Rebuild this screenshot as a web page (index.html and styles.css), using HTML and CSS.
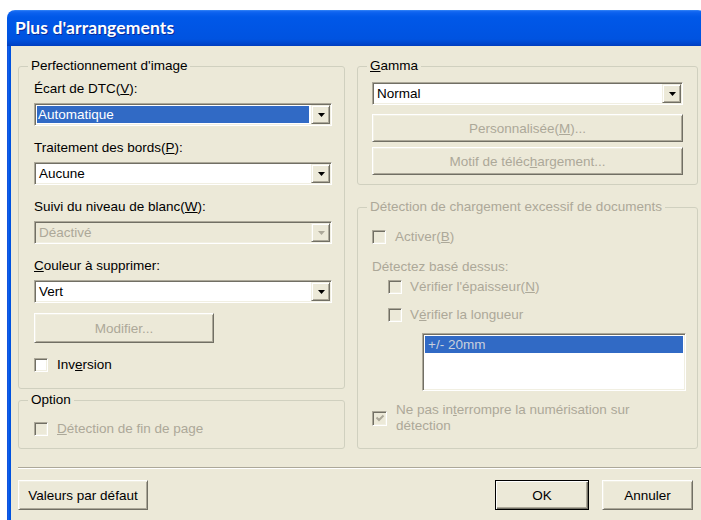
FILE: index.html
```html
<!DOCTYPE html>
<html lang="fr">
<head>
<meta charset="utf-8">
<title>Plus d'arrangements</title>
<link rel="stylesheet" href="styles.css">
</head>
<body>
<div class="window">
  <div class="titlebar"><span class="title">Plus d'arrangements</span></div>
  <div class="frame">
    <div class="client">
      <div class="columns">
        <div class="col">
          <fieldset class="group">
            <legend>Perfectionnement d'image</legend>
            <div class="gbody g-image">
              <div class="label">Écart de DTC(<u>V</u>):</div>
              <div class="combo"><span class="field selected">Automatique</span><span class="drop"><svg width="7" height="4" viewBox="0 0 7 4"><path d="M0 0h7L3.5 4z"/></svg></span></div>
              <div class="label">Traitement des bords(<u>P</u>):</div>
              <div class="combo"><span class="field">Aucune</span><span class="drop"><svg width="7" height="4" viewBox="0 0 7 4"><path d="M0 0h7L3.5 4z"/></svg></span></div>
              <div class="label">Suivi du niveau de blanc(<u>W</u>):</div>
              <div class="combo disabled"><span class="field">Déactivé</span><span class="drop"><svg width="7" height="4" viewBox="0 0 7 4"><path d="M0 0h7L3.5 4z"/></svg></span></div>
              <div class="label"><u>C</u>ouleur à supprimer:</div>
              <div class="combo"><span class="field">Vert</span><span class="drop"><svg width="7" height="4" viewBox="0 0 7 4"><path d="M0 0h7L3.5 4z"/></svg></span></div>
              <div class="btn disabled btn-modify">Modifier...</div>
              <div class="check check-inv"><span class="box"></span><span>Inv<u>e</u>rsion</span></div>
            </div>
          </fieldset>
          <fieldset class="group group-option">
            <legend>Option</legend>
            <div class="gbody g-option">
              <div class="check disabled"><span class="box"></span><span><u>D</u>étection de fin de page</span></div>
            </div>
          </fieldset>
        </div>
        <div class="col">
          <fieldset class="group">
            <legend><u>G</u>amma</legend>
            <div class="gbody g-gamma">
              <div class="combo combo-wide"><span class="field">Normal</span><span class="drop"><svg width="7" height="4" viewBox="0 0 7 4"><path d="M0 0h7L3.5 4z"/></svg></span></div>
              <div class="btn disabled btn-wide btn-custom">Personnalisée(<u>M</u>)...</div>
              <div class="btn disabled btn-wide btn-motif">Motif de téléc<u>h</u>argement...</div>
            </div>
          </fieldset>
          <fieldset class="group group-detect disabled">
            <legend>Détection de chargement excessif de documents</legend>
            <div class="gbody g-detect">
              <div class="check disabled"><span class="box"></span><span>Activer(<u>B</u>)</span></div>
              <div class="label label-based">Détectez basé dessus:</div>
              <div class="check disabled sub sub-thick"><span class="box"></span><span>Vérifier l'épaisseur(<u>N</u>)</span></div>
              <div class="check disabled sub sub-length"><span class="box"></span><span>V<u>é</u>rifier la longueur</span></div>
              <div class="listbox"><div class="item selected">+/- 20mm</div></div>
              <div class="check disabled multi"><span class="box checked"><svg width="10" height="10" viewBox="0 0 10 10"><path d="M1.5 4.5l2.5 2.5 4.5-4.5" fill="none" stroke-width="2"/></svg></span><span>Ne pas in<u>t</u>errompre la numérisation sur<br>détection</span></div>
            </div>
          </fieldset>
        </div>
      </div>
      <div class="sep"></div>
      <div class="footer">
        <div class="btn btn-defaults">Valeurs par défaut</div>
        <div class="btn default btn-ok">OK</div>
        <div class="btn btn-cancel">Annuler</div>
      </div>
    </div>
  </div>
</div>
</body>
</html>
```

FILE: styles.css
```css
* { box-sizing: border-box; }

html, body {
  margin: 0;
  padding: 0;
  background: #fff;
  overflow: hidden;
}

body {
  width: 701px;
  height: 520px;
  font-family: "Liberation Sans", Arial, sans-serif;
  font-size: 13.5px;
  color: #000;
}

u { text-decoration: underline; text-underline-offset: 1px; }

/* window chrome */
.window {
  margin: 10px 0 0 7px;
  width: 699px;
  height: 520px;
  border-radius: 8px 8px 0 0;
  overflow: hidden;
  display: flex;
  flex-direction: column;
}

.titlebar {
  height: 36px;
  flex: none;
  display: flex;
  align-items: center;
  padding: 0 0 2px 8px;
  background: linear-gradient(to bottom, #3d8ef7 0, #1a6cf2 1px, #0a60ee 3px, #0058e8 7px, #0055e4 20px, #0053e0 29px, #004bd4 32px, #0042c6 35px, #003cbb 36px);
}

.title {
  color: #fff;
  font-family: "Lato", "Open Sans", sans-serif;
  font-weight: 700;
  font-size: 17.5px;
  letter-spacing: 0.1px;
  text-shadow: 1px 1px 0 #0a2a9a;
}

.frame {
  flex: 1;
  padding: 0 4px;
  background: linear-gradient(to right, #0a3fd0 0, #1a66ec 1px, #0058e8 2px, #0050dc 4px);
}

.client {
  height: 100%;
  background: #ece9d8;
  padding: 0 4px 0 7px;
}

.columns {
  display: grid;
  grid-template-columns: 327px 341px;
  column-gap: 12px;
  padding-top: 13px;
}

.col {
  display: flex;
  flex-direction: column;
}

/* group boxes */
.group {
  margin: 0;
  padding: 0;
  min-width: 0;
  border: 1px solid #d0d0bf;
  border-radius: 3px;
}

.group legend {
  margin-left: 9px;
  padding: 0 3px;
  line-height: 14px;
  height: 14px;
  white-space: nowrap;
}

.group.disabled legend { color: #aca899; }

.group-option { margin-top: 4px; }
.group-detect { margin-top: 15px; }

.g-image { padding: 8px 0 15px 15px; }
.g-option { padding: 14px 0 11px 15px; }
.g-gamma { padding: 9px 14px 9px 14px; }
.g-detect { padding: 15px 0 14px 14px; }

.label {
  height: 16px;
  line-height: 16px;
  white-space: nowrap;
  margin-top: 14px;
}

.g-image .label:first-child { margin-top: 0; }

/* combo boxes */
.combo {
  display: flex;
  width: 298px;
  height: 23px;
  margin-top: 6px;
  padding: 2px;
  background: #fff;
  border: 1px solid;
  border-color: #aca899 #fff #fff #aca899;
  box-shadow: inset 1px 1px #716f64, inset -1px -1px #f1efe2;
}

.combo-wide { width: 311px; margin-top: 0; }

.field {
  flex: 1;
  height: 17px;
  line-height: 17px;
  padding-left: 2px;
  margin-right: 2px;
  white-space: nowrap;
}

.field.selected {
  background: #316ac5;
  color: #fff;
  padding-left: 1px;
}

.drop {
  flex: none;
  width: 19px;
  margin: -1px -1px -1px 0;
  display: flex;
  align-items: center;
  justify-content: center;
  background: #ece9d8;
  border: 1px solid;
  border-color: #f1efe2 #716f64 #716f64 #f1efe2;
  box-shadow: inset 1px 1px #fff, inset -1px -1px #aca899;
}

.drop svg { fill: #000; display: block; margin-left: 1px; }

.combo.disabled { background: #ece9d8; }
.combo.disabled .field { color: #aca899; }
.combo.disabled .drop svg { fill: #aca899; }

/* push buttons */
.btn {
  height: 30px;
  display: flex;
  align-items: center;
  justify-content: center;
  white-space: nowrap;
  background: #ece9d8;
  border: 1px solid;
  border-color: #fff #716f64 #716f64 #fff;
  box-shadow: inset 1px 1px #f1efe2, inset -1px -1px #aca899;
}

.btn.disabled { color: #aca899; }

.btn-modify { width: 180px; margin-top: 10px; }
.btn-wide { width: 311px; height: 28px; }
.btn-custom { margin-top: 9px; }
.btn-motif { margin-top: 5px; }

.btn.default {
  border-color: #000;
  box-shadow: inset 1px 1px #fff, inset -1px -1px #716f64, inset -2px -2px #aca899;
}

/* check boxes */
.check {
  display: flex;
  align-items: center;
  height: 16px;
  line-height: 16px;
  white-space: nowrap;
}

.check-inv { margin-top: 14px; }

.box {
  flex: none;
  width: 14px;
  height: 14px;
  margin-right: 9px;
  display: flex;
  align-items: center;
  justify-content: center;
  background: #fff;
  border: 1px solid;
  border-color: #aca899 #fff #fff #aca899;
  box-shadow: inset 1px 1px #716f64, inset -1px -1px #f1efe2;
}

.check.disabled { color: #aca899; }
.check.disabled .box { background: #ece9d8; }

.box svg { display: block; stroke: #aca899; }

.label-based { margin-top: 14px; color: #aca899; }

.sub { padding-left: 16px; }
.sub .box { margin-right: 8px; }
.sub-thick { margin-top: 4px; }
.sub-length { margin-top: 12px; }

.check.multi {
  height: 32px;
  margin-top: 11px;
  align-items: center;
  white-space: normal;
}

.check.multi .box { width: 15px; height: 15px; margin-right: 9px; }

/* list box */
.listbox {
  width: 264px;
  height: 58px;
  margin: 10px 0 0 50px;
  padding: 2px;
  background: #fff;
  border: 1px solid;
  border-color: #aca899 #fff #fff #aca899;
  box-shadow: inset 1px 1px #716f64, inset -1px -1px #f1efe2;
}

.item {
  height: 17px;
  line-height: 17px;
  padding-left: 3px;
}

.item.selected {
  background: #316ac5;
  color: #c9d0dc;
}

/* bottom bar */
.sep {
  margin: 18px -4px 0 0;
  height: 2px;
  border-top: 1px solid #aca899;
  border-bottom: 1px solid #fff;
}

.footer {
  display: flex;
  margin-top: 11px;
  padding-right: 5px;
}

.btn-defaults { width: 130px; }
.btn-ok { width: 94px; margin-left: auto; }
.btn-cancel { width: 91px; margin-left: 13px; }
```
